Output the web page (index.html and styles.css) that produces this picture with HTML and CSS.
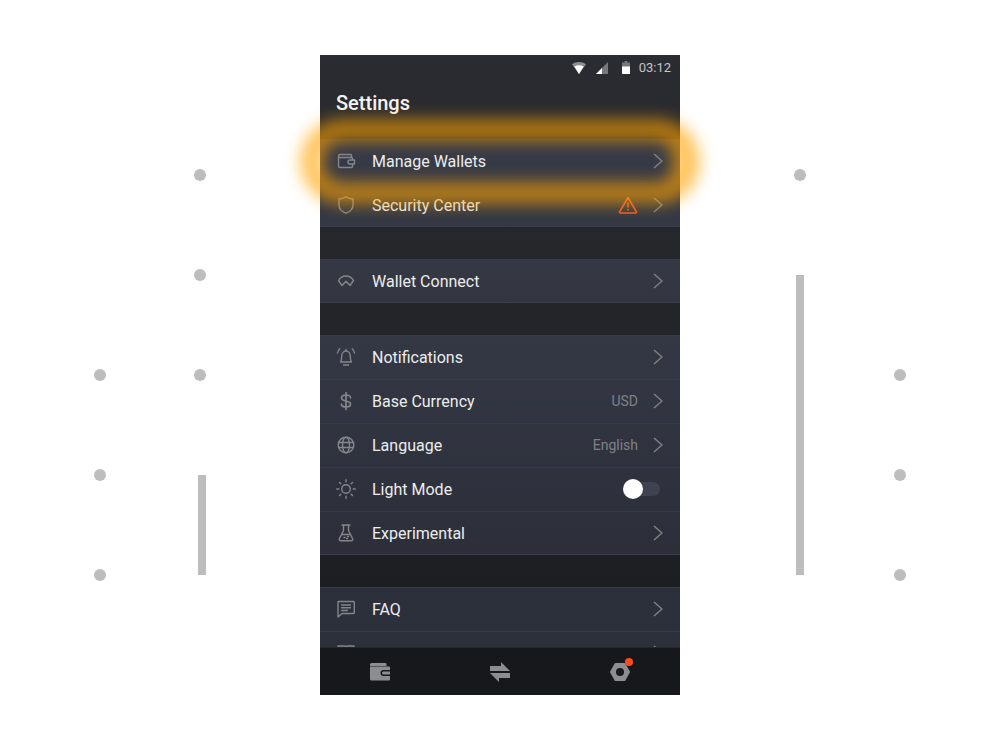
FILE: index.html
```html
<!DOCTYPE html>
<html>
<head>
    <meta charset="utf-8" />
    <title>Settings</title>
    <link rel="stylesheet" href="styles.css">
</head>
<body>
    <section id="stage">
        <!-- gesture marks on both sides of the phone -->
        <span class="dot dot-a"></span>
        <span class="dot dot-b"></span>
        <span class="dot dot-c"></span>
        <span class="dot dot-d"></span>
        <span class="dot dot-e"></span>
        <span class="dot dot-f"></span>
        <span class="bar bar-left"></span>
        <span class="dot dot-g"></span>
        <span class="bar bar-right"></span>
        <span class="dot dot-h"></span>
        <span class="dot dot-i"></span>
        <span class="dot dot-j"></span>

        <section id="phone">
            <header class="statusbar">
                <svg width="14" height="12" viewBox="0 0 14 12"><path d="M0 2.200C2 .8 4.400 0 7 0s5 .8 7 2.200L7 12z" fill="#8d8e92"/><path d="M2.400 4.400C3.700 3.600 5.300 3.200 7 3.200s3.300.4 4.600 1.200L7 12z" fill="#fff"/></svg>
                <svg class="signal" width="12" height="12" viewBox="0 0 12 12"><path d="M12 0v12H0z" fill="#77787c"/><path d="M6 6v6H0z" fill="#fff"/></svg>
                <svg class="battery" width="8" height="13" viewBox="0 0 8 13"><path d="M2.500 0h3v1.500H8V13H0V1.500h2.500z" fill="#77787c"/><path d="M0 5.500h8V13H0z" fill="#fff"/></svg>
                <span class="clock">03:12</span>
            </header>
            <h1 class="title">Settings</h1>

            <div class="scroller">
                <section class="group group-wallets">
                    <div class="row">
                        <svg class="icon" viewBox="0 0 20 20"><path d="M2.500 6.500h13a1 1 0 0 1 1 1V9M2.500 6.500V5A1.500 1.500 0 0 1 4 3.500h10.500a1 1 0 0 1 1 1v2M2.500 6.500V15A1.500 1.500 0 0 0 4 16.500h11.500a1 1 0 0 0 1-1V13M16.500 9h-2.500a2 2 0 0 0 0 4h4.500V9z"/></svg>
                        <span class="label">Manage Wallets</span>
                        <svg class="chevron" viewBox="0 0 10 16"><path d="M1 1l8 7-8 7"/></svg>
                    </div>
                    <div class="row">
                        <svg class="icon" viewBox="0 0 20 20"><path d="M10 1.800c2.300 1.300 4.500 2 7 2.200v6c0 4-3 6.800-7 8.200-4-1.400-7-4.200-7-8.200V4c2.500-.2 4.700-.9 7-2.200z"/></svg>
                        <span class="label">Security Center</span>
                        <svg class="warn" width="20" height="18" viewBox="0 0 20 18"><path d="M10 1.500l8.500 14.500a.7.7 0 0 1-.6 1H2.100a.7.7 0 0 1-.6-1z" fill="none" stroke="#f0592a" stroke-width="1.500" stroke-linejoin="round"/><path d="M10 6.500v5M10 13v1.500" fill="none" stroke="#f0592a" stroke-width="1.600"/></svg>
                        <svg class="chevron" viewBox="0 0 10 16"><path d="M1 1l8 7-8 7"/></svg>
                    </div>
                </section>

                <section class="group group-connect">
                    <div class="row">
                        <svg class="icon" viewBox="0 0 20 20"><path d="M2.500 9.500C6 3.500 14 3.500 17.500 9.500L14 14.500l-4-4.300-4 4.300z"/></svg>
                        <span class="label">Wallet Connect</span>
                        <svg class="chevron" viewBox="0 0 10 16"><path d="M1 1l8 7-8 7"/></svg>
                    </div>
                </section>

                <section class="group group-prefs">
                    <div class="row">
                        <svg class="icon" viewBox="0 0 20 20"><path d="M4.500 15c1-1.500 1.200-3 1.200-5.500C5.700 6.500 7.500 4 10 4s4.300 2.500 4.300 5.500c0 2.500.2 4 1.200 5.500zM7.500 18h5M1.500 6c.2-1.700 1-3.200 2.300-4.300M18.500 6c-.2-1.700-1-3.200-2.300-4.300M10 2.500V4"/></svg>
                        <span class="label">Notifications</span>
                        <svg class="chevron" viewBox="0 0 10 16"><path d="M1 1l8 7-8 7"/></svg>
                    </div>
                    <div class="row">
                        <svg class="icon" viewBox="0 0 20 20"><path d="M14.500 6.800C14.500 5 12.500 4 10 4S5.500 5 5.500 7s2 2.500 4.500 3 4.500 1.200 4.500 3-2 3-4.500 3-4.500-1-4.500-2.800M10 1.500v17" class="thick"/></svg>
                        <span class="label">Base Currency</span>
                        <span class="value">USD</span>
                        <svg class="chevron" viewBox="0 0 10 16"><path d="M1 1l8 7-8 7"/></svg>
                    </div>
                    <div class="row">
                        <svg class="icon" viewBox="0 0 20 20"><circle cx="10" cy="10" r="7.800"/><ellipse cx="10" cy="10" rx="3.500" ry="7.800"/><path d="M2.500 7.500h15M2.500 12.500h15"/></svg>
                        <span class="label">Language</span>
                        <span class="value">English</span>
                        <svg class="chevron" viewBox="0 0 10 16"><path d="M1 1l8 7-8 7"/></svg>
                    </div>
                    <div class="row">
                        <svg class="icon" viewBox="0 0 20 20"><circle cx="10" cy="10" r="4.300"/><path d="M10 .8v2M10 17.200v2M.8 10h2M17.200 10h2M3.500 3.500l1.300 1.300M15.200 15.200l1.300 1.300M3.500 16.500l1.300-1.300M15.200 4.800l1.300-1.300"/></svg>
                        <span class="label">Light Mode</span>
                        <span class="toggle"><span class="knob"></span></span>
                    </div>
                    <div class="row">
                        <svg class="icon" viewBox="0 0 20 20"><path d="M6 2h8M7.500 2v5.500L3.500 15.500a1.500 1.500 0 0 0 1.300 2.300h10.400a1.500 1.500 0 0 0 1.300-2.300l-4-8V2M5.500 11.500h9"/><path d="M8 14.500h1M11.500 13.500h1M10.500 15.500h1"/></svg>
                        <span class="label">Experimental</span>
                        <svg class="chevron" viewBox="0 0 10 16"><path d="M1 1l8 7-8 7"/></svg>
                    </div>
                </section>

                <section class="group group-help">
                    <div class="row">
                        <svg class="icon" viewBox="0 0 20 20"><path d="M2.500 2.500h15a.8.800 0 0 1 .8.800v10.400a.8.800 0 0 1-.8.800H6l-4 3.500V3.300a.8.800 0 0 1 .5-.8zM5.500 6h9M5.500 8.800h9M5.500 11.500h6"/></svg>
                        <span class="label">FAQ</span>
                        <svg class="chevron" viewBox="0 0 10 16"><path d="M1 1l8 7-8 7"/></svg>
                    </div>
                    <div class="row">
                        <svg class="icon" viewBox="0 0 20 20"><path d="M2 3h6.500c.7 0 1.500.5 1.500 1.500C10 3.500 10.800 3 11.500 3H18v13h-6.500c-.7 0-1.500.5-1.500 1.500 0-1-.8-1.500-1.500-1.500H2z"/></svg>
                        <span class="label"></span>
                        <svg class="chevron" viewBox="0 0 10 16"><path d="M1 1l8 7-8 7"/></svg>
                    </div>
                </section>
            </div>

            <nav class="tabbar">
                <svg width="20" height="18" viewBox="0 0 20 18"><path d="M1.500 0H15.500a1 1 0 0 1 1 1v2H0V1.500A1.500 1.500 0 0 1 1.500 0z" fill="#8c8d91"/><path d="M0 3.500h19a1 1 0 0 1 1 1V7h-6.500a3 3 0 0 0 0 6H20v3.500a1 1 0 0 1-1 1H1.500A1.500 1.500 0 0 1 0 16z" fill="#8c8d91"/><path d="M13.500 8.500H20V11.500h-6.500a1.500 1.500 0 0 1 0-3z" fill="#8c8d91"/></svg>
                <svg width="20" height="20" viewBox="0 0 20 20"><path d="M11 0l9 9H0V4h11z" fill="#8c8d91"/><path d="M9 20l-9-9h20v5H9z" fill="#8c8d91"/></svg>
                <span class="nut">
                    <svg width="20" height="18" viewBox="0 0 20 18"><path d="M5.500 1h9l4.500 8-4.500 8h-9L1 9z" fill="#8c8d91" stroke="#8c8d91" stroke-width="2" stroke-linejoin="round"/><circle cx="10" cy="9" r="4" fill="#17181c"/></svg>
                    <span class="badge"></span>
                </span>
            </nav>
        </section>

        <!-- highlight ring, sits over the phone edge -->
        <div class="glow"></div>
    </section>
</body>
</html>
```

FILE: styles.css
```css
*{
    padding:0;
    margin:0;
    box-sizing:border-box;
}
body{
    background:#fff;
    font-family:Roboto,"Liberation Sans",sans-serif;
}
#stage{
    position:relative;
    width:1000px;
    height:750px;
    padding-top:55px;
    overflow:hidden;
}

/* marks */
.dot{
    position:absolute;
    width:12px;
    height:12px;
    border-radius:50%;
    background:#bdbdbe;
}
.dot-a{left:194px;top:169px;}
.dot-b{left:194px;top:269px;}
.dot-c{left:194px;top:369px;}
.dot-d{left:94px;top:369px;}
.dot-e{left:94px;top:469px;}
.dot-f{left:94px;top:569px;}
.dot-g{left:794px;top:169px;}
.dot-h{left:894px;top:369px;}
.dot-i{left:894px;top:469px;}
.dot-j{left:894px;top:569px;}
.bar{
    position:absolute;
    width:8px;
    background:#bdbdbe;
}
.bar-left{left:198px;top:475px;height:100px;}
.bar-right{left:796px;top:275px;height:300px;}

/* phone */
#phone{
    width:360px;
    height:640px;
    margin:0 auto;
    display:flex;
    flex-direction:column;
    overflow:hidden;
    background:linear-gradient(#2b2c31,#1a1b1f);
    color:#eceded;
}
.statusbar{
    height:25px;
    flex:none;
    display:flex;
    align-items:center;
    justify-content:flex-end;
    padding-right:9px;
}
.signal{margin-left:10px;}
.battery{margin-left:14px;}
.clock{
    margin-left:9px;
    font-size:13px;
    color:#c4c5c8;
}
.title{
    height:59px;
    flex:none;
    padding:11px 0 0 16px;
    font-size:20px;
    line-height:24px;
    font-weight:500;
    color:#f4f4f5;
}
.scroller{
    flex:1;
    overflow:hidden;
}
.group{
    margin-bottom:32px;
    box-shadow:inset 0 -1px 0 #3c3f4b;
}
.group-wallets{background:linear-gradient(#373b48,#343844);}
.group-connect{background:linear-gradient(#353945,#33363f);}
.group-prefs{background:linear-gradient(#343844,#2c2f3a);}
.group-help{background:#2c303b;}
.row{
    height:44px;
    display:flex;
    align-items:center;
    padding:0 16px;
    border-top:1px solid #383b47;
}
.icon{
    width:20px;
    height:20px;
    flex:none;
    margin-top:-1px;
    fill:none;
    stroke:#85868c;
    stroke-width:1.400;
    stroke-linejoin:round;
    stroke-linecap:round;
}
.thick{stroke-width:1.700;}
.label{
    flex:1;
    margin-left:16px;
    font-size:16px;
}
.value{
    margin-right:15px;
    margin-top:-1px;
    font-size:14px;
    color:#7f8087;
}
.warn{
    margin-right:15px;
    margin-top:-1px;
}
.chevron{
    width:10px;
    height:16px;
    flex:none;
    margin-right:1px;
    margin-top:-1px;
    fill:none;
    stroke:#7f8085;
    stroke-width:1.500;
}
.toggle{
    position:relative;
    width:27px;
    height:14px;
    margin-right:4px;
    margin-top:-1px;
    border-radius:7px;
    background:#3f4350;
}
.knob{
    position:absolute;
    left:-10px;
    top:-3px;
    width:20px;
    height:20px;
    border-radius:50%;
    background:#fff;
}

/* bottom tabs */
.tabbar{
    height:48px;
    flex:none;
    display:flex;
    align-items:center;
    justify-content:space-around;
    background:#17181c;
    border-top:1px solid #26272c;
}
.tabbar svg{display:block;}
.nut{position:relative;}
.badge{
    position:absolute;
    right:-3px;
    top:-5px;
    width:8px;
    height:8px;
    border-radius:50%;
    background:#ff4a22;
}

/* highlight */
.glow{
    position:absolute;
    left:300px;
    top:119px;
    width:400px;
    height:85px;
    border:22px solid rgba(255,162,0,.64);
    border-left-width:23px;
    border-right-width:27px;
    border-radius:42px;
    filter:blur(8px);
}
```
